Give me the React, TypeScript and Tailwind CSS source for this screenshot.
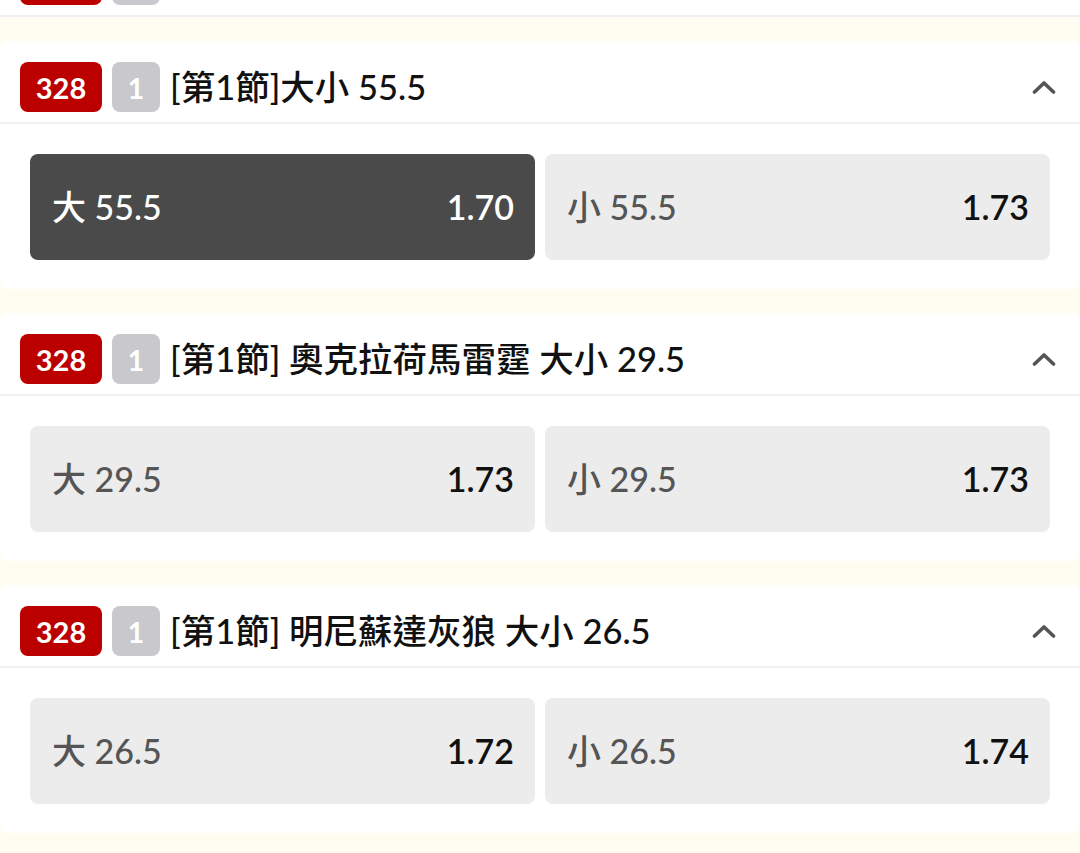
import React from "react";

type Market = {
  title: string;
  opts: { label: string; odds: string; selected?: boolean }[];
  collapsed?: boolean;
};

const markets: Market[] = [
  { title: "[第1節]大小 55.5", opts: [], collapsed: true },
  {
    title: "[第1節]大小 55.5",
    opts: [
      { label: "大 55.5", odds: "1.70", selected: true },
      { label: "小 55.5", odds: "1.73" },
    ],
  },
  {
    title: "[第1節] 奧克拉荷馬雷霆 大小 29.5",
    opts: [
      { label: "大 29.5", odds: "1.73" },
      { label: "小 29.5", odds: "1.73" },
    ],
  },
  {
    title: "[第1節] 明尼蘇達灰狼 大小 26.5",
    opts: [
      { label: "大 26.5", odds: "1.72" },
      { label: "小 26.5", odds: "1.74" },
    ],
  },
];

function Chevron({ up }: { up: boolean }) {
  return (
    <svg width="24" height="14" viewBox="0 0 24 14" className={up ? "" : "rotate-180"}>
      <path d="M2.5 12 L12 3 L21.5 12" fill="none" stroke="#555" strokeWidth="3.6" strokeLinecap="round" strokeLinejoin="round" />
    </svg>
  );
}

function Header({ title, up }: { title: string; up: boolean }) {
  return (
    <div className="flex items-center pt-[21px] pb-[10px] pl-[20px] pr-[24px] border-b-2 border-[#efeff4]">
      <div className="w-[82px] h-[50px] rounded-[8px] bg-[#bb0000] flex items-center justify-center text-white font-bold text-[29px] leading-none">
        328
      </div>
      <div className="ml-[10px] w-[48px] h-[50px] rounded-[8px] bg-[#c8c8cd] flex items-center justify-center text-white font-bold text-[29px] leading-none">
        1
      </div>
      <div className="ml-[10px] flex-1 text-[34.5px] leading-none text-[#111] font-medium whitespace-nowrap">
        {title}
      </div>
      <Chevron up={up} />
    </div>
  );
}

export default function App() {
  return (
    <div
      className="min-h-screen bg-[#fffcf1] overflow-hidden"
      style={{ fontFamily: '"Lato", "Noto Sans CJK TC", sans-serif' }}
    >
      <div className="flex flex-col gap-[24px]">
        {markets.map((m, i) => (
          <div
            key={i}
            className={`bg-white rounded-[8px] ${i === 0 ? "-mt-[66px]" : ""}`}
          >
            <Header title={m.title} up={!m.collapsed} />
            {!m.collapsed && (
              <div className="grid grid-cols-2 gap-[10px] px-[30px] pt-[30px] pb-[29px]">
                {m.opts.map((o, j) => (
                  <div
                    key={j}
                    className={`h-[106px] rounded-[8px] flex items-center justify-between pl-[22px] pr-[21px] text-[34px] leading-none ${
                      o.selected ? "bg-[#4a4a4a] text-white" : "bg-[#ececec]"
                    }`}
                  >
                    <span className={`font-medium ${o.selected ? "text-white" : "text-[#555]"}`}>{o.label}</span>
                    <span className={`font-semibold ${o.selected ? "text-white" : "text-[#111]"}`}>{o.odds}</span>
                  </div>
                ))}
              </div>
            )}
          </div>
        ))}
      </div>
    </div>
  );
}
